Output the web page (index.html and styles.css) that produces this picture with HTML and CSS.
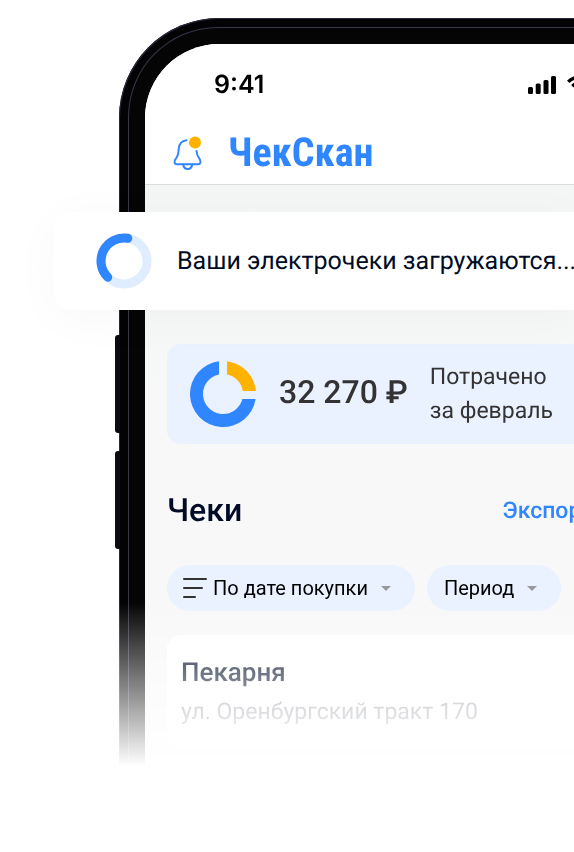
FILE: index.html
```html
<!DOCTYPE html>
<html lang="ru">
<head>
    <meta charset="UTF-8">
    <meta name="viewport" content="width=device-width, initial-scale=1">
    <title>ЧекСкан</title>
    <link rel="stylesheet" href="styles.css">
</head>
<body>
    <main class="scene">
        <div class="phone-wrap">
            <span class="side-button volume-up"></span>
            <span class="side-button volume-down"></span>
            <div class="phone">
                <div class="bezel">
                    <div class="screen">
                        <header class="header">
                            <div class="status">
                                <span class="time">9:41</span>
                                <div class="status-icons">
                                    <svg width="29" height="18" viewBox="0 0 29 18" aria-hidden="true">
                                        <rect x="0" y="11" width="5" height="7" rx="1.5"/>
                                        <rect x="7.700" y="7.500" width="5" height="10.500" rx="1.500"/>
                                        <rect x="15.500" y="4" width="5" height="14" rx="1.500"/>
                                        <rect x="23" y="0" width="5" height="18" rx="1.500"/>
                                    </svg>
                                    <svg width="26" height="18" viewBox="0 0 26 18" fill="none" stroke="#000" stroke-width="3.400" aria-hidden="true">
                                        <path d="M1.200 5.800a17 17 0 0 1 23.600 0"/>
                                        <path d="M5.300 10.200a11 11 0 0 1 15.400 0"/>
                                        <path d="M13 17.500l-3.500-3.500a5 5 0 0 1 7 0z" fill="#000" stroke="none"/>
                                    </svg>
                                </div>
                            </div>
                            <div class="brand">
                                <button class="bell" aria-label="Уведомления">
                                    <svg width="30" height="35" viewBox="0 0 30 35" fill="none" stroke="#2f86ff" stroke-width="2" stroke-linecap="round" stroke-linejoin="round">
                                        <path d="M13.500 4.200C9 4.700 6 8 5.700 13C5.500 18.500 4.700 20.500 2.700 22.800C0.600 25.200 1.300 28.200 4 28.200H25C27.700 28.200 28.400 25.200 26.500 22.800C24.500 20.300 23.700 18.500 23.500 15"/>
                                        <path d="M10.200 28.500C10.600 31.500 12.200 33 14.700 33S18.800 31.500 19.200 28.500"/>
                                        <circle cx="22" cy="6.500" r="6" fill="#ffb000" stroke="none"/>
                                    </svg>
                                </button>
                                <span class="logo">ЧекСкан</span>
                            </div>
                        </header>

                        <section class="content">
                            <div class="summary">
                                <svg width="68" height="68" viewBox="0 0 68 68" aria-hidden="true">
                                    <path fill="#2f86ff" d="M30 1.240A33 33 0 1 0 66.600 39H53.400A20 20 0 1 1 30 14.400z"/>
                                    <path fill="#ffb300" d="M38 1.240A33 33 0 0 1 66.900 31H53.800A20 20 0 0 0 38 14.400z"/>
                                </svg>
                                <span class="amount">32 270 ₽</span>
                                <span class="caption">Потрачено<br>за февраль</span>
                            </div>

                            <div class="title-row">
                                <h1>Чеки</h1>
                                <a href="#export">Экспорт</a>
                            </div>

                            <div class="filters">
                                <button class="chip">
                                    <svg width="24" height="22" viewBox="0 0 24 22" stroke="#333" stroke-width="2" stroke-linecap="round" aria-hidden="true">
                                        <path d="M1 2H23M1 11H19M1 20H12"/>
                                    </svg>
                                    <span class="chip-text">По дате покупки</span>
                                    <span class="arrow"></span>
                                </button>
                                <button class="chip period">
                                    <span class="chip-text">Период</span>
                                    <span class="arrow"></span>
                                </button>
                            </div>

                            <article class="receipt">
                                <h2>Пекарня</h2>
                                <p>ул. Оренбургский тракт 170</p>
                            </article>
                        </section>
                    </div>
                </div>
            </div>
        </div>

        <div class="toast" role="status">
            <svg width="56" height="56" viewBox="0 0 56 56" fill="none" stroke-width="9" aria-hidden="true">
                <circle cx="28" cy="28" r="23" stroke="#e0ecff"/>
                <path d="M31.800 5.300A23 23 0 0 0 11.700 44.200" stroke="#2f86ff" stroke-linecap="round"/>
            </svg>
            <span>Ваши электрочеки загружаются...</span>
        </div>
    </main>
</body>
</html>
```

FILE: styles.css
```css
* {
    box-sizing: border-box;
}

body {
    margin: 0;
    background: #fff;
    font-family: Roboto, "Noto Sans", sans-serif;
    text-rendering: geometricPrecision;
    color: #000c26;
}

h1, h2, p {
    margin: 0;
}

button {
    padding: 0;
    border: none;
    background: none;
    font-family: inherit;
    color: inherit;
    cursor: pointer;
}

svg {
    display: block;
    flex: none;
}

.scene {
    position: relative;
    min-height: 100vh;
    padding: 18px 0 0 119px;
    overflow: hidden;
}

/* phone body, fades out to the bottom */
.phone-wrap {
    position: relative;
    -webkit-mask-image: linear-gradient(#000 585px, transparent 748px);
    mask-image: linear-gradient(#000 585px, transparent 748px);
    margin-left: -4px;
    padding-left: 4px;
}

.phone {
    padding: 9px 0 0 9px;
    border-radius: 100px 0 0 0;
    background: #030305;
    box-shadow: inset 1px 1px 0 #2a2638;
}

.bezel {
    padding: 16px 0 0 16px;
    border-left: 1px solid #3a3648;
    border-top: 1px solid #3a3648;
    border-radius: 90px 0 0 0;
    background: #050505;
}

.side-button {
    position: absolute;
    left: 0;
    width: 5px;
    height: 98px;
    border-radius: 3px 0 0 3px;
    background: #0b0c12;
}

.volume-up {
    top: 317px;
}

.volume-down {
    top: 433px;
}

.screen {
    border-radius: 74px 0 0 0;
    background: #f8f8f8;
    overflow: hidden;
}

.header {
    height: 141px;
    padding: 26px 0 0 28px;
    border-bottom: 1px solid #dcdcdc;
    background: #fff;
}

.status {
    display: flex;
    align-items: center;
    justify-content: space-between;
    height: 30px;
    margin-right: -19px;
    padding-left: 41px;
}

.time {
    font-family: Inter, sans-serif;
    font-size: 25px;
    font-weight: 600;
    color: #000;
}

.status-icons {
    display: flex;
    gap: 10px;
}

.brand {
    display: flex;
    align-items: center;
    gap: 25px;
    height: 50px;
    margin-top: 28px;
}

.logo {
    font-family: "Roboto Condensed", "Open Sans Condensed", "Liberation Sans Narrow", "Noto Sans", sans-serif;
    font-size: 40px;
    font-weight: 700;
    line-height: 50px;
    color: #2f86ff;
}

.content {
    padding: 159px 0 20px 22px;
    background: linear-gradient(#f4f6f6, #f8f8f8 260px);
}

.summary {
    display: flex;
    align-items: center;
    height: 100px;
    padding-left: 22px;
    border-radius: 14px 0 0 14px;
    background: #eaf2ff;
    color: #333;
    white-space: nowrap;
}

.amount {
    margin-left: 22px;
    padding-bottom: 4px;
    font-size: 32px;
    font-weight: 500;
}

.caption {
    margin-left: 22px;
    font-size: 23px;
    line-height: 34px;
}

.title-row {
    display: flex;
    align-items: center;
    justify-content: space-between;
    height: 40px;
    margin: 46px -18px 0 0;
}

.title-row h1 {
    font-size: 32px;
    font-weight: 500;
}

.title-row a {
    font-size: 23px;
    font-weight: 500;
    color: #2f86ff;
    text-decoration: none;
}

.filters {
    display: flex;
    gap: 12px;
    margin-top: 35px;
}

.chip {
    display: flex;
    align-items: center;
    flex: none;
    height: 46px;
    padding: 0 24px 0 16px;
    border-radius: 23px;
    background: #eaf2ff;
    font-size: 20px;
    color: #000;
}

.chip-text {
    margin: 0 13px 0 6px;
}

.period .chip-text {
    margin-left: 1px;
}

.arrow {
    border: 5px solid transparent;
    border-top-color: #97999f;
    border-bottom: none;
}

.receipt {
    margin-top: 24px;
    padding: 20px 14px;
    border-radius: 14px 0 0 14px;
    background: #fff;
}

.receipt h2 {
    font-size: 26px;
    font-weight: 500;
    line-height: 36px;
}

.receipt p {
    margin-top: 4px;
    font-size: 23px;
    line-height: 34px;
    color: #989ba3;
    white-space: nowrap;
}

/* loading message over the phone */
.toast {
    position: absolute;
    top: 212px;
    left: 54px;
    right: 0;
    display: flex;
    align-items: center;
    gap: 25px;
    height: 98px;
    padding-left: 42px;
    border-radius: 18px 0 0 18px;
    background: #fff;
    box-shadow: 0 8px 50px rgba(0, 12, 38, 0.03);
    font-size: 25px;
    white-space: nowrap;
}
```
